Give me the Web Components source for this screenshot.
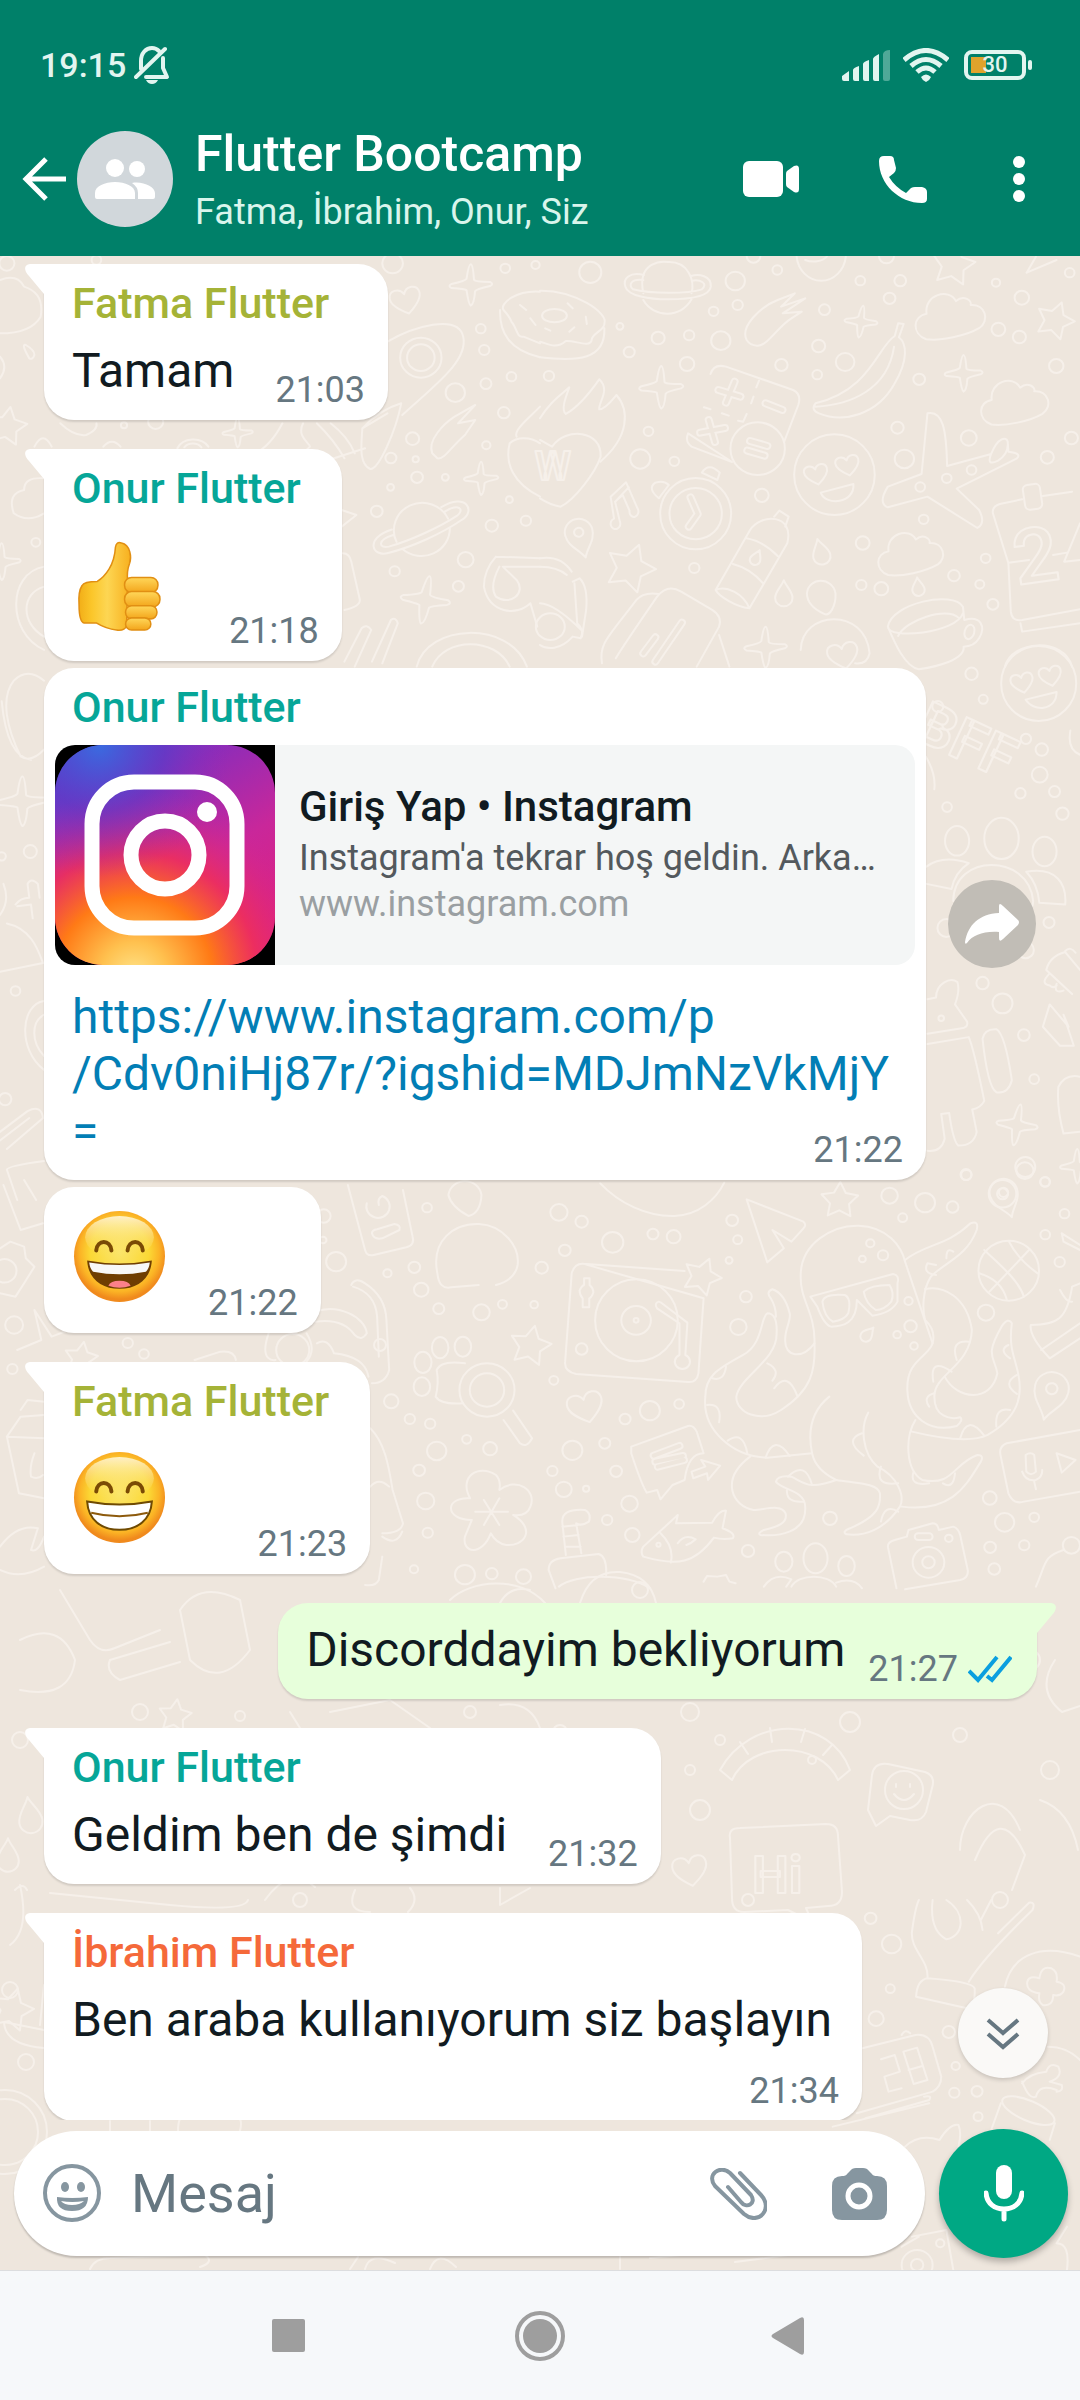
<!DOCTYPE html>
<html lang="tr">
<head>
<meta charset="utf-8">
<meta name="viewport" content="width=device-width, initial-scale=1">
<title>Flutter Bootcamp</title>
<style>
  html, body { margin: 0; height: 100%; }
  body { font-family: Roboto, "Noto Sans", sans-serif; color: #111b21; background: #eee6dd; }
</style>
</head>
<body>
<chat-app>
  <status-bar slot="top" time="19:15" battery="30"></status-bar>
  <chat-header slot="top">
    <span slot="title">Flutter Bootcamp</span>
    <span slot="members">Fatma, İbrahim, Onur, Siz</span>
  </chat-header>

  <chat-message tail time="21:03" style="--sender:#a5b337"><span slot="sender">Fatma Flutter</span>Tamam</chat-message>
  <chat-message tail emoji time="21:18" style="--sender:#06a698"><span slot="sender">Onur Flutter</span><emoji-glyph name="thumb"></emoji-glyph></chat-message>
  <chat-message time="21:22" follow forward style="--sender:#06a698"><span slot="sender">Onur Flutter</span>
    <link-preview slot="preview">
      <span slot="title">Giriş Yap • Instagram</span>
      <span slot="description">Instagram'a tekrar hoş geldin. Arka…</span>
      <span slot="site">www.instagram.com</span>
    </link-preview>
    <chat-link href="https://www.instagram.com/p/Cdv0niHj87r/?igshid=MDJmNzVkMjY=">https://www.instagram.com/p<br>/Cdv0niHj87r/?igshid=MDJmNzVkMjY<br>=</chat-link>
  </chat-message>
  <chat-message follow emoji time="21:22"><emoji-glyph name="laugh"></emoji-glyph></chat-message>
  <chat-message tail emoji time="21:23" style="--sender:#a5b337"><span slot="sender">Fatma Flutter</span><emoji-glyph name="grin"></emoji-glyph></chat-message>
  <chat-message tail own time="21:27">Discorddayim bekliyorum</chat-message>
  <chat-message tail time="21:32" style="--sender:#06a698"><span slot="sender">Onur Flutter</span>Geldim ben de şimdi</chat-message>
  <chat-message tail stacked time="21:34" style="--sender:#f5693a"><span slot="sender">İbrahim Flutter</span>Ben araba kullanıyorum siz başlayın</chat-message>

  <message-composer slot="composer"></message-composer>
  <system-nav slot="bottom"></system-nav>
</chat-app>

<script>
const BUTTON_RESET = `button{appearance:none;border:0;margin:0;padding:0;background:none;color:inherit;font:inherit;display:flex;align-items:center;justify-content:center;cursor:pointer;flex:none}svg{display:block;flex:none}`;

function define(tag, render, after) {
  customElements.define(tag, class extends HTMLElement {
    constructor() {
      super();
      this.attachShadow({ mode: 'open' });
    }
    connectedCallback() {
      this.shadowRoot.innerHTML = render(this);
      if (after) after(this);
    }
  });
}

/* ---------- doodle wallpaper ---------- */
function star(x, y, r, turn = 0) {
  let d = '';
  for (let i = 0; i < 10; i++) {
    const a = (turn + i * 36 - 90) * Math.PI / 180, k = i % 2 ? r * 0.52 : r;
    d += (i ? 'L' : 'M') + (x + k * Math.cos(a)).toFixed(1) + ' ' + (y + k * Math.sin(a)).toFixed(1);
  }
  return `<path d="${d}Z"/>`;
}
function spark(x, y, r, turn = 0) {
  return `<path transform="translate(${x} ${y}) rotate(${turn}) scale(${r / 20})" d="M0-20Q2-20 3-5Q4-3 18-3Q22-1 18 1Q5 4 4 6Q3 19 0 20Q-2 19-4 5Q-5 4-18 3Q-22 1-18-1Q-5-4-4-6Q-2-20 0-20Z"/>`;
}
function cloud(x, y, s, turn = 0) {
  return `<path transform="translate(${x} ${y}) rotate(${turn}) scale(${s})" d="M-22-6C-22-26 4-30 9-15C18-21 25-13 23-9C38-8 40 10 28 16C14 22-12 24-26 20C-40 12-36-6-22-6Z"/>`;
}
function heart(x, y, s, turn = 0) {
  return `<path transform="translate(${x} ${y}) rotate(${turn}) scale(${s})" d="M0 16C-10 9-18 2-17-6C-16-15-4-16 0-7C4-16 16-15 17-6C18 2 10 9 0 16Z"/>`;
}
function drop(x, y, s, turn = 0) {
  return `<path transform="translate(${x} ${y}) rotate(${turn}) scale(${s})" d="M0-14C2-8 9-2 9 5A9 9 0 0 1-9 5C-9-2-2-8 0-14Z"/>`;
}
function pin(x, y, s, turn = 0) {
  return `<g transform="translate(${x} ${y}) rotate(${turn}) scale(${s})"><path d="M0 24C-4 14-15 8-15-5A15 15 0 0 1 15-5C15 8 4 14 0 24Z"/><circle cy="-5" r="5"/></g>`;
}
function dots(list) {
  return list.trim().split(/\s+/).map(t => { const [x, y, r] = t.split(','); return `<circle cx="${x}" cy="${y}" r="${r}"/>`; }).join('');
}
function planet(x, y, s, turn = 0) {
  return `<g transform="translate(${x} ${y}) rotate(${turn}) scale(${s})"><path d="M-25 3A25 25 0 1 1 25 3M-23 11A25 25 0 0 0 23 11M-24-9C-50-12-50 7-36 9C-15 13 15 13 36 9C50 7 50-12 24-9M-25-4C-40-6-42 2-33 4C-15 7 15 7 33 4C42 2 40-6 25-4"/></g>`;
}
const tile = (x, y, sy, body) => `<g transform="translate(${x} ${y}) scale(.3444 ${sy})">${body}</g>`;

const upperRight = tile(540, 250, .3333, dots('146,67,32 567,93,28 689,60,14 574,165,15 504,184,14 433,256,15 343,264,19 232,229,10 259,306,16 525,272,28 427,342,21 826,179,16 930,92,14 1015,145,17 1046,92,17 1324,98,12 1399,143,21 1331,238,20 1392,261,19 1499,348,21 809,288,19 886,336,27 805,374,14 701,345,18 1101,388,17 1245,564,23 1038,533,18 1058,627,28 1473,622,19 1543,564,19 26,378,15 315,544,14 390,634,14 291,627,29 644,736,20 448,954,15 937,879,20 1114,808,14 933,1005,15 991,1016,20 1202,977,17 1277,1003,13 1294,925,14 1315,1063,16 1538,68,14 620,18,20 1006,18,22') + `
  <path d="M300 130C280 30 360 34 372 36C430 34 450 90 440 130M300 150C330 205 410 205 440 148M302 75C260 65 240 85 248 110C255 138 320 148 372 148C440 148 492 138 496 110C498 75 460 72 438 78M300 90C265 85 255 105 270 118C320 132 430 132 470 118C490 100 465 88 442 92"/>
  <path d="M600 270C580 230 640 170 690 150L740 130L700 170L770 145L705 190L760 185L730 205C690 230 660 290 630 287Q610 286 600 270Z"/>
  <path d="M1040 220L1030 258C980 290 960 420 800 460Q785 480 810 490C880 520 980 495 1030 400C1070 330 1065 280 1042 262L1056 222ZM800 470C900 465 1010 420 1028 290"/>
  <path d="M745 20A72 82 0 0 0 888 20M770 30A45 30 0 0 0 833 20"/>
  <path d="M0 122C100 120 200 190 187 220C190 240 150 250 150 270C145 295 100 270 75 273C45 300 20 280 0 275M187 235C190 330 110 335 0 322M80 160L95 175M133 200L136 222M85 245L100 232M15 235L30 242"/><ellipse cx="42" cy="197" rx="36" ry="20"/>
  <path d="M495 372Q505 340 540 350L735 420Q760 432 750 465L709 575M558 636L440 590Q420 575 430 550ZM636 392L628 412M620 440L613 460M476 472L495 478M528 490L548 497M600 492L590 515L575 512"/>
  <circle cx="632" cy="596" r="79"/><g class="wide"><path d="M610 573L660 588M602 602L652 617M655 460L704 480M565 395L540 458M518 420L582 440M490 510L508 576M465 548L537 534"/></g><g class="core"><path d="M610 573L660 588M602 602L652 617M655 460L704 480M565 395L540 458M518 420L582 440M490 510L508 576M465 548L537 534"/></g>
  <ellipse cx="855" cy="674" rx="117" ry="121"/><path d="M815 728L910 702C915 760 830 770 815 728Z"/>
  <path d="M1125 490C1170 480 1180 540 1182 648L1310 612C1330 560 1355 560 1358 575L1360 605Q1400 610 1385 625L1210 716L1275 780Q1295 820 1270 834L1125 740L1010 772Q980 760 1010 710L1108 672ZM1310 612Q1295 650 1330 632Q1362 610 1358 575"/>
  <circle cx="1104" cy="711" r="14"/><circle cx="1181" cy="685" r="14"/><circle cx="1253" cy="660" r="14"/>
  <path d="M0 505C30 455 55 440 85 412C75 440 60 480 75 492C95 480 130 450 172 388C205 420 170 455 172 478C190 478 210 450 222 435C260 480 260 560 175 635"/>
  <path d="M0 570L35 590C75 530 180 540 176 620C160 670 100 750 60 770Q30 765 0 745"/>
  <path d="M205 740L250 697L283 775A13 16 0 1 1 260 782L240 735L218 755L232 815A14 16 0 1 1 215 806ZM218 755L258 712"/>
  <ellipse cx="452" cy="791" rx="103" ry="107"/><ellipse cx="452" cy="791" rx="76" ry="77"/><g class="wide"><path d="M437 742L458 792L432 830"/></g><g class="core"><path d="M437 742L458 792L432 830"/></g><path d="M470 668Q490 635 522 668L515 690ZM345 745Q310 715 335 698Q360 690 374 705Z"/>
  <path d="M510 1020L610 840C640 790 740 790 718 880L608 1075C570 1070 520 1040 510 1020C540 1005 590 1030 608 1075M600 865Q650 875 690 918M560 942Q610 955 648 1000M680 800L695 782L722 800L712 830"/>
  <path d="M1360 940L1315 790Q1312 770 1335 762L1400 748M1460 738L1545 725M1360 940L1367 1085Q1370 1115 1400 1110L1568 1078M1395 1120L1400 1145L1568 1120M1360 938L1420 930M1490 915L1530 908M1568 820L1522 935L1568 930"/><rect x="1405" y="703" width="50" height="75" rx="14" transform="rotate(-8 1430 740)"/>
  <path d="M1010 1130C1020 1060 1200 1020 1228 1070L1232 1110C1280 1095 1295 1130 1275 1165Q1260 1190 1230 1190C1235 1230 1150 1250 1100 1258C1060 1250 1030 1180 1010 1130C1010 1170 1210 1150 1228 1090M1040 1158C1060 1110 1180 1070 1215 1103"/><ellipse cx="1247" cy="1146" rx="14" ry="22" transform="rotate(15 1247 1146)"/>
  <path d="M180 1240C170 1180 200 1160 280 1050Q300 1025 345 1032M220 1225Q240 1190 340 1040Q370 1000 410 1025L500 1080Q530 1100 520 1130L455 1250M520 1155L550 1250"/><g class="wide"><path d="M300 1210L335 1162M335 1235L412 1118"/></g><g class="core"><path d="M300 1210L335 1162M335 1235L412 1118"/></g>
  <path d="M775 1030C780 980 850 980 858 1030C860 1070 840 1100 825 1092C800 1080 775 1060 775 1030ZM757 1200C760 1080 945 1070 957 1210Q950 1245 915 1240"/>
  <path d="M0 925Q60 915 92 965M0 950Q50 950 78 975M100 1000L108 1120Q130 1140 118 1165L95 1160C60 1200 20 1200 0 1185M0 1060Q40 1060 120 1140M95 995L115 985Q140 1010 134 1080L122 1160"/><ellipse cx="30" cy="1130" rx="42" ry="40"/>
  <path d="M1350 1250C1370 1170 1520 1160 1545 1250M1413 68L1440 20M1413 68L1500 30"/>` +
  star(1200, 45, 65, 10) + star(1495, 212, 58, 20) + star(262, 955, 75, 20) + spark(352, 412, 64) + spark(932, 215, 48, 8) + spark(1230, 370, 55) + spark(655, 1192, 62) +
  cloud(1188, 200, 2.9, -8) + cloud(1375, 458, 2.8, -8) + cloud(1073, 912, 2.7, -8) + heart(802, 672, 2, -12) + heart(893, 645, 2, -12) + heart(880, 1215, 2.6, -12) +
  pin(116, 860, 2.7, -15) + drop(815, 905, 2.8, -14) + drop(708, 1030, 2.8) + drop(1098, 1010, 2, -6) + drop(628, 922, 1.7, 25) +
  `<text x="-15" y="690" font-size="120" font-weight="700">W</text><text x="1385" y="1005" font-size="230" font-weight="500" transform="rotate(-8 1385 1005)">2</text>`);

const upperLeft = tile(0, 250, .3333, dots('1140,40,30 1467,55,14 1396,236,14 1406,300,15 1485,380,14 1411,401,16 1322,428,28 1463,488,17 1198,566,19 1412,586,12 1135,624,16 1207,628,9 1211,682,17 1293,682,10 1134,712,10 1094,784,17 1479,749,10 1428,827,18 1527,812,15 1352,929,23 1146,964,15 1331,1009,16 104,877,13 360,526,9 452,515,22 1555,45,12 20,40,22 280,30,14') + `
  <path d="M1125 275C1200 230 1330 190 1345 260C1360 330 1270 400 1168 495M1165 460C1150 540 1100 660 1075 657C1040 640 1050 580 1052 535Q1100 480 1165 460M1125 490L1052 535"/>
  <circle cx="1222" cy="323" r="60"/><circle cx="1222" cy="323" r="40"/>
  <path d="M1255 610C1240 570 1290 520 1320 500L1380 465L1330 520L1380 510L1350 555C1310 590 1290 630 1270 625Z"/>
  <path d="M1568 125C1500 120 1450 160 1462 180Q1480 200 1485 215C1500 230 1500 265 1520 260L1568 280M1452 180C1450 250 1480 300 1568 322M1510 165L1528 180M1540 205L1555 225"/>
  <path d="M1500 560C1490 540 1540 500 1568 470M1480 580C1500 560 1540 560 1568 580M1480 580C1465 640 1490 700 1568 740"/>
  <path d="M820 520Q780 600 720 620M880 520C860 560 900 580 900 590L880 610M920 520Q970 570 1000 625M960 520Q1010 560 1030 610M970 625L1060 595"/>
  <path d="M515 595A50 42 0 0 1 605 590M535 592A30 25 0 0 1 585 592M100 590Q125 540 150 590M300 590Q325 560 350 590M175 520Q215 560 250 555Q285 540 280 520"/>
  <path d="M0 90Q50 70 70 110Q130 130 118 200Q90 250 0 250M0 320Q25 350 0 385M85 325Q60 280 75 285Q100 300 100 315Q95 330 85 325"/>
  <path d="M128 790Q80 820 40 790Q20 730 70 720Q70 680 128 685M128 950C20 970 20 1150 128 1200M128 1010C60 1030 60 1120 128 1160"/>
  <path d="M992 780L1035 795L992 830M995 910Q1015 910 1020 935L1045 1050Q1045 1070 1000 1080"/>
  <path d="M1440 920L1568 925M1440 920Q1405 960 1405 1010C1420 1090 1500 1100 1540 1060L1560 1130M1450 950Q1420 1010 1440 1040C1480 1070 1530 1030 1500 990L1460 950H1568"/>
  <path d="M1000 1235L1050 1135Q1065 1120 1078 1140L1030 1250M1080 1235L1135 1110Q1150 1100 1155 1120L1110 1240M1210 1250C1240 1120 1480 1110 1530 1250M1255 1250C1290 1160 1440 1160 1480 1250"/>` +
  spark(1367, 105, 62) + spark(690, 548, 44) + spark(1397, 685, 50) + spark(1235, 1050, 72, 10) + heart(1178, 150, 2.6, -14) + star(20, 530, 60, 10) + planet(1222, 832, 3.3, -25) + spark(5, 935, 55));

const midRight = tile(540, 660, .3444, dots('1253,40,18 1287,114,13 1411,229,15 1457,260,18 1451,333,23 1395,387,15 1494,382,16 1182,427,14 1517,446,18 1478,762,16 1410,842,24 1285,938,18 1343,997,29 1405,1089,17 1435,1217,14 1409,1472,29 1237,1494,16 1467,1515,14 1180,778,26 1155,135,16 1165,1040,8') + `
  <circle cx="1448" cy="68" r="109"/><path d="M1410 115L1500 93C1500 150 1430 150 1410 115ZM1120 280Q1150 330 1145 375"/>
  <text x="1080" y="225" font-size="170" font-weight="700" transform="rotate(25 1080 225)">BFF</text>
  <ellipse cx="1211" cy="525" rx="35" ry="43"/><ellipse cx="1340" cy="518" rx="50" ry="60"/><ellipse cx="1465" cy="556" rx="35" ry="43"/>
  <path d="M1122 600Q1170 565 1245 590C1215 610 1200 640 1195 665L1122 650M1200 700C1200 560 1420 560 1432 700Q1430 745 1380 738L1200 710M1412 615C1500 600 1530 650 1525 710L1450 705Q1445 650 1412 615"/>
  <path d="M1125 985L1150 980C1150 940 1190 920 1212 935Q1220 960 1205 1000L1240 1050Q1245 1068 1220 1070L1125 1085M1125 1115L1245 1095Q1260 1130 1290 1280Q1280 1300 1255 1305L1268 1370Q1260 1410 1215 1410Q1200 1400 1188 1315L1165 1318L1175 1390Q1165 1430 1125 1425"/>
  <path d="M1285 1100Q1290 1070 1325 1072Q1350 1085 1370 1220Q1360 1260 1325 1255Q1300 1240 1285 1100ZM1480 1000L1535 1065L1520 1030L1550 1120L1510 1120L1460 1065Z"/>
  <path d="M1470 900Q1480 860 1525 848L1568 900M1470 900L1545 970M1480 910Q1450 940 1480 945Q1490 955 1500 945M1500 940Q1490 970 1520 960M1525 845Q1540 830 1555 850M1540 205Q1530 260 1568 275M1520 1375Q1500 1300 1505 1240Q1525 1200 1568 1210M1520 1375L1568 1370"/>
  <circle cx="1343" cy="1550" r="40"/><circle cx="1343" cy="1550" r="16"/>` +
  heart(1400, 65, 1.9, -12) + heart(1482, 45, 1.9, -12) + spark(1385, 1350, 60, 10) + spark(1560, 1470, 50));

const lowerRight = tile(540, 1170, .3333, dots('55,127,25 121,155,18 211,217,31 328,192,16 388,200,20 72,241,17 558,151,17 574,209,13 549,271,10 598,380,17 576,471,24 1015,77,24 1118,98,29 1198,111,17 1053,143,13 1238,15,15 1523,131,14 1467,194,14 1509,276,15 1295,428,24 40,631,13 319,722,29 404,702,14 247,747,16 188,820,16 94,841,29 221,904,17 36,903,15 69,958,23 134,956,9 260,1001,24 195,1050,15 268,1095,21 604,1143,18 842,1045,20 1306,984,20 1349,1057,28 1435,1042,14 1307,1132,17 1406,1126,15 1319,1197,17 959,220,12 996,256,15 936,267,10 1070,393,12 1076,469,18 1037,494,11 1086,528,11 5,293,18 1466,36,14 1408,2,25') + `
  <path d="M125 281L420 303M475 385L460 610Q455 638 430 636L105 612Q70 605 73 575L92 310Q100 280 125 281Z"/>
  <ellipse cx="280" cy="451" rx="120" ry="123"/><circle cx="279" cy="451" r="43"/><circle cx="279" cy="451" r="7"/><circle cx="121" cy="537" r="17"/>
  <path d="M128 325H144V345Q155 355 155 367Q150 382 143 385V412H124V385Q115 375 115 362Q120 348 128 345ZM345 395Q330 400 340 415L405 460V555A22 22 0 1 0 422 555L428 458L350 397Z"/>
  <path d="M175 40C230 100 310 140 390 138C460 135 510 90 535 38M600 88L765 155Q775 165 765 175L730 215L675 180L708 235L660 277Z"/>
  <path d="M797 520C800 430 755 390 757 320C755 220 850 165 925 167C1010 170 1050 230 1060 275L1140 520C1130 560 1060 570 1067 665C1070 740 1130 790 1210 768Q1230 750 1220 742C1190 750 1145 740 1145 680C1145 610 1250 590 1254 480C1240 380 1170 345 1118 357"/>
  <path d="M1060 270C1120 220 1180 230 1250 160Q1275 150 1268 180C1240 260 1170 280 1135 320C1110 360 1110 420 1118 450Q1150 480 1140 520"/>
  <path d="M797 520C800 600 790 660 700 720C640 760 570 730 570 680C580 620 690 570 687 490Q690 430 660 430C640 440 650 520 590 555C510 600 480 620 480 680C470 780 560 860 660 863L790 850M797 520C760 570 710 560 712 510C710 480 730 450 725 430Q710 370 675 358Q655 365 670 385Q685 410 685 440"/>
  <path d="M840 680C780 730 780 800 790 850Q800 900 860 930C780 960 770 940 730 920Q690 915 685 935C700 960 770 960 770 1010C775 1090 690 1100 640 1095Q630 1090 650 1080C690 1070 720 1060 713 1030C700 1000 650 1020 620 1020C560 1010 520 930 610 860"/>
  <path d="M953 728C930 770 935 850 980 890C1040 920 1060 980 1045 1010C1000 1080 940 1100 890 1093Q875 1085 900 1075C980 1040 990 1010 987 970C980 940 920 940 860 930M1090 750C1060 800 1060 900 1110 930C1200 950 1200 880 1270 855Q1290 855 1280 875C1240 940 1200 1030 1050 1010M1080 785C1160 805 1250 820 1300 795C1390 740 1400 680 1390 620C1380 560 1360 540 1370 460Q1360 440 1340 470C1290 560 1320 560 1328 610C1310 700 1210 690 1175 620"/>
  <path d="M500 625Q535 635 540 590M485 705Q530 700 520 757M545 812Q590 780 602 850M655 863Q680 790 725 858M660 580Q700 600 675 632M680 655Q720 600 748 680M1200 245Q1180 230 1180 265M1150 315Q1110 310 1125 280L1150 285M1245 515Q1190 510 1210 570M1195 605Q1130 560 1142 635M1145 670Q1110 680 1130 710M1360 525Q1330 540 1365 565M1385 615Q1340 640 1385 672M1365 720Q1320 710 1325 770M1220 805Q1240 730 1290 797M720 920Q770 870 790 945M717 960Q715 1000 765 995M935 790Q880 810 940 857M990 890Q970 950 1040 940M1085 905Q1070 950 1130 940M1170 940Q1200 960 1205 910M990 1055Q1000 1000 1040 1025"/>
  <path d="M785 380L1025 312Q1045 315 1038 340V395Q1020 430 965 437L920 390C920 460 880 470 845 470Q825 465 805 410ZM820 395Q825 370 885 375Q905 385 895 430Q885 450 850 455Q825 440 820 395ZM940 365Q960 345 1015 345Q1030 370 1020 395Q1000 420 975 420Q945 400 940 365"/>
  <ellipse cx="1361" cy="302" rx="88" ry="90"/><path d="M1290 240C1330 280 1390 330 1405 380M1275 310Q1340 330 1355 388M1362 215Q1390 270 1445 310M1305 365L1420 240"/>
  <path d="M1425 465C1500 465 1530 450 1545 350L1568 340M1425 465Q1420 500 1480 565L1568 505M1455 540L1568 460M1510 360Q1530 400 1545 395M1515 190L1568 225M1515 190L1520 215L1568 240"/>
  <path d="M1568 780L1355 820Q1330 830 1338 860L1360 970Q1375 1005 1405 995L1568 965M1410 855Q1425 845 1435 855L1440 905Q1425 920 1412 905ZM1400 905Q1410 935 1440 930Q1460 920 1458 900M1435 935L1440 958M1500 850L1555 870L1515 908Z"/>
  <path d="M265 830L430 768Q445 765 455 785L475 850Q430 850 420 930L385 945L350 988L340 960L310 968Q295 945 265 850ZM440 905L480 890L468 870L523 887L488 930L485 910L445 925Z"/><g class="wide"><path d="M330 857L405 828M335 875L415 858M342 890L418 870"/></g><g class="core"><path d="M330 857L405 828M335 875L415 858M342 890L418 870"/></g>
  <path d="M300 1130L400 1035L395 1060L500 1058Q520 1020 540 1022L530 1075Q570 1090 560 1105Q530 1110 505 1103C450 1180 400 1190 300 1160Q290 1145 300 1130ZM350 1090Q390 1130 380 1178M400 1120Q420 1090 452 1108Q440 1120 425 1125"/><circle cx="344" cy="1124" r="6"/>
  <path d="M75 1155L65 1060Q60 1015 130 1020Q150 1030 142 1055Q120 1070 105 1060L120 1150M65 1070L110 1065M68 1100L112 1095M72 1130L118 1130M45 1255L25 1200Q25 1170 60 1165L170 1152Q195 1160 192 1215M55 1250C100 1210 250 1210 320 1255"/>
  <path d="M1035 1255L1010 1130Q1010 1115 1030 1110L1065 1100L1070 1080L1140 1060Q1155 1060 1158 1080L1200 1070Q1215 1075 1220 1095L1242 1200Q1245 1225 1220 1230L1060 1258"/><circle cx="1128" cy="1177" r="46"/><circle cx="1128" cy="1177" r="18"/><circle cx="1187" cy="1105" r="11"/><rect x="1088" y="1090" width="52" height="20" rx="10"/>
  <ellipse cx="708" cy="1175" rx="25" ry="30"/><ellipse cx="800" cy="1165" rx="35" ry="45"/><ellipse cx="890" cy="1188" rx="24" ry="30"/><path d="M650 1250Q680 1205 730 1228L715 1250M730 1250C750 1210 840 1210 860 1250M860 1238Q910 1220 935 1255M1440 1250C1470 1180 1460 1160 1520 1140M475 1235L485 1218L515 1220L540 1215L550 1235L568 1240"/><circle cx="1543" cy="1126" r="25"/>` +
  star(870, 92, 56, 2) + star(470, 320, 58, 22) + heart(132, 710, 3, -15) + pin(1350, 80, 2.7, -18) + pin(1482, 672, 3.3, 14) + drop(952, 492, 1.8, 40));

const midLeft = tile(0, 1170, .3333, dots('1240,113,14 1203,292,17 1125,310,12 1223,359,21 1274,416,16 1398,427,24 1459,403,13 1551,404,11 976,275,29 940,138,20 938,210,10 1136,694,21 1190,747,15 1249,761,15 1268,843,28 1355,808,13 1423,836,20 1217,901,17 1236,993,25 1242,1088,15 1350,1214,29 1428,1211,17 1520,1220,22 1202,1198,12 41,465,26 36,597,15 371,519,15 418,552,14') + `
  <path d="M1010 45L1060 240Q1065 260 1085 255L1180 232Q1205 225 1198 200L1170 60M1065 100A34 34 0 1 0 1110 78Q1095 85 1100 105M1080 190Q1080 180 1095 178L1145 162Q1165 165 1160 180L1110 205Q1085 210 1080 190Z"/>
  <path d="M1302 75C1310 20 1390 20 1398 75Q1395 130 1360 138Q1310 110 1302 75ZM1270 310C1250 210 1320 160 1390 162C1460 165 1510 230 1503 285Q1495 330 1440 345M1270 310Q1275 360 1310 352L1390 345"/>
  <path d="M1020 345Q1030 320 1060 340Q1120 380 1122 450L1130 600Q1120 640 1080 640M1025 350Q1090 370 1095 440L1100 560M915 425C980 400 1060 440 1065 490Q1050 515 1030 495C1000 450 950 450 915 455M780 490C750 580 800 570 800 570M920 520Q950 500 970 550Q1060 560 1070 620M890 490Q920 540 890 575"/><circle cx="850" cy="540" r="48"/>
  <ellipse cx="1278" cy="533" rx="24" ry="32"/><ellipse cx="1344" cy="530" rx="24" ry="30"/><ellipse cx="1228" cy="577" rx="25" ry="32"/><ellipse cx="1225" cy="650" rx="24" ry="28"/><path d="M1350 580Q1280 570 1268 600Q1275 640 1265 680Q1280 705 1345 700"/><circle cx="1414" cy="660" r="80"/><circle cx="1414" cy="660" r="50"/><path d="M1462 750L1510 820Q1530 835 1545 805L1490 722"/>
  <path d="M1370 1050C1290 1050 1290 980 1365 985C1330 920 1390 880 1440 915Q1455 930 1450 960C1500 920 1560 960 1540 1010Q1530 1040 1490 1035C1560 1080 1520 1130 1470 1125Q1440 1120 1425 1090C1400 1160 1340 1150 1350 1100ZM1380 1025H1475M1405 990L1450 1065M1450 985L1405 1065"/>
  <path d="M1075 775C1120 820 1130 900 1140 960L1170 1060Q1165 1090 1110 1090M1075 950Q1100 920 1130 950M1110 1100Q1150 1130 1168 1085M1110 1160L1100 1230Q1090 1250 1060 1245"/>
  <path d="M0 270A35 35 0 1 1 0 335M0 235L30 215L70 230L75 265L100 290L70 340L45 380L0 370M10 45L60 180L125 160M70 30L105 90M50 540L120 510L100 420L150 500L200 480M60 720L80 690L128 695M20 800L128 805M20 800L60 740L128 735M20 800L55 970L128 985M100 850Q85 890 90 920Q110 930 125 915M0 1130Q50 1060 110 1075L90 1140Q110 1150 128 1100M0 1200Q60 1230 128 1190M565 570L640 545Q680 540 685 570"/>` +
  star(1540, 528, 62, 12) + star(235, 565, 50, 10));

const upperLink = tile(0, 660, .3444, dots('88,556,19 45,961,14 15,1275,18 5,570,12') + `
  <path d="M128 60Q80 20 40 60C0 110 20 200 60 280Q90 300 128 260M5 120Q20 280 90 290M45 710Q60 690 85 690L80 650Q90 630 110 650L115 690M50 715L90 710L95 750M10 650Q30 700 0 740M20 765C90 780 110 840 125 880L0 905M128 990C60 1000 50 1130 128 1190M128 1030C90 1050 90 1110 128 1150M0 1370L80 1310Q120 1290 125 1330L20 1420M0 1395L85 1330M20 1480Q20 1470 128 1455M20 1480L50 1568"/>` + spark(65, 410, 72));

const bottomRight = tile(540, 1900, .3333, dots('960,55,17 1021,132,28 1017,266,13 976,356,22 1187,396,18 1207,498,12 1203,578,15 1269,574,16 1272,650,13 1162,1030,12') + `
  <path d="M1125 235C1130 180 1075 150 1080 95Q1090 20 1100 0M1125 235Q1095 240 1092 290L1240 325Q1265 320 1262 265Q1255 245 1125 235M1245 245Q1290 170 1430 30Q1440 5 1420 8L1330 100M1240 0Q1280 40 1285 90M1310 0L1280 60M1140 0Q1130 90 1180 118C1230 110 1240 40 1180 0M1350 260C1370 160 1460 130 1568 170"/>
  <path d="M1415 245Q1420 225 1450 235Q1455 195 1485 205Q1505 215 1500 245Q1530 250 1520 275Q1510 290 1490 285Q1490 320 1460 315Q1445 305 1450 280Q1410 275 1415 245ZM1400 550Q1420 520 1470 515Q1480 485 1505 500Q1520 530 1480 545L1515 555Q1520 575 1500 575M1400 545Q1420 600 1440 590M1440 590Q1450 550 1500 570M1568 480Q1530 440 1475 440"/>
  <path d="M936 445L1090 405Q1130 400 1140 440L1165 530Q1165 560 1140 575L920 640M1050 405Q1060 385 1075 400M945 655L1130 600Q1140 585 1115 590M850 680L1130 610"/>
  <path d="M990 478L1030 465L1045 515L1000 530L1012 575L1050 565M1055 455L1095 443L1125 540L1085 552ZM1070 510L1110 498"/>
  <ellipse cx="1418" cy="632" rx="82" ry="30" transform="rotate(24 1418 632)"/><path d="M1338 610L1310 690M1495 670L1480 720M1060 740Q1100 700 1160 720Q1190 670 1215 675Q1225 700 1215 740M1080 1010L1180 990L1200 1110M1050 1040L1100 1010M1530 980L1500 1030Q1540 1030 1530 1110"/><circle cx="1095" cy="1095" r="45"/><circle cx="1095" cy="1095" r="18"/>`);

/* Lower band, drawn straight in wallpaper units */
const loose = dots('560,1732,7 640,1590,8 690,1712,9 720,1740,5 748,1900,6 700,1810,10 850,1722,10 960,1735,7 1050,1770,9 1030,1660,10 690,1770,5 812,1760,4 1000,1900,8 470,1712,6 300,1900,7 140,1712,8 240,1716,5 380,1345,6 20,1740,8 10,1990,8 26,2062,8') +
  star(175, 1716, 17, 8) + star(12, 2010, 22, 15) + drop(30, 1815, 1.3, -8) + drop(8, 1855, 1.2) + heart(690, 1870, 1, -10) +
  `<text x="752" y="1893" font-size="52" font-weight="700">Hi</text>
  <path d="M730 1838Q728 1828 740 1828L826 1824Q838 1824 838 1836L842 1892Q842 1906 828 1906L806 1908L812 1922L788 1910L744 1912Q732 1912 732 1898ZM868 1810L872 1775Q874 1762 888 1764L925 1772Q936 1776 932 1788L926 1812Q922 1822 910 1820L890 1816L876 1826Z"/>
  <circle cx="904" cy="1790" r="19"/><path d="M894 1794Q904 1806 914 1794M896 1784v3M910 1784v3"/>
  <path d="M720 1770C750 1715 830 1715 850 1770L838 1780C820 1740 750 1740 732 1780ZM740 1742l8 12M770 1728l2 14M805 1729l-4 13M832 1745l-9 10M960 1850C960 1810 1000 1780 1020 1830M975 1860Q1000 1800 1025 1855L1012 1890M1040 1800Q1070 1810 1078 1850M1055 1660Q1035 1690 1062 1712L1080 1706"/>
  <path d="M450 1600C470 1580 520 1575 545 1603M500 1603Q510 1585 530 1590M580 1603Q590 1570 620 1572Q650 1575 656 1603M60 1590L90 1640Q100 1655 115 1648L160 1630M20 1640Q60 1620 75 1660Q70 1700 20 1690M290 1712L300 1728M330 1712L390 1700L430 1728M500 1705Q530 1700 540 1728M110 1660l60-18M120 1680l60-18M110 1660q-5 12 10 20M180 1610Q200 1580 240 1600L250 1650Q220 1690 190 1660Z"/>
  <path d="M44 1985L40 2025M4 2022L44 2030M4 2022Q5 2045 44 2048M50 1893L170 1905Q245 1912 248 1900M265 1900Q290 1865 315 1887M355 1890Q345 1912 370 1912M410 1888Q420 1900 408 1912M500 1888L500 1905L530 1888M20 1885Q30 1930 10 1945M15 1890q8-8 12 0"/>
  <circle cx="5" cy="2132" r="42"/><circle cx="5" cy="2132" r="33"/><path d="M110 2131v-10M150 2131v-10M178 2131q0-8 2-12M240 2131q2-8 0-12M90 2269Q95 2258 110 2258L205 2255Q215 2262 200 2267M350 2269l8-12M365 2269q5-18 30-6M430 2269q8-20 26-2M620 2269v-12M650 2258l60-6M735 2262l60-8"/>`;

define('chat-wallpaper', () => `
<style>
:host{display:block;background:#eee6dd;overflow:hidden}
svg{display:block;width:100%;height:100%}
path,circle,ellipse,rect{vector-effect:non-scaling-stroke}
text{stroke-width:6px}
text[font-size="52"]{stroke-width:2px}
.wide{stroke-width:8px}
.core{stroke:#eee6dd;stroke-width:4px}
</style>
<svg aria-hidden="true" viewBox="0 256 1080 2014" preserveAspectRatio="xMidYMin slice" fill="none" stroke="#f6f0ea" stroke-width="2" stroke-linejoin="round" stroke-linecap="round" font-family="Roboto, sans-serif">
${upperLeft}${upperRight}${upperLink}${midRight}${midLeft}${lowerRight}${bottomRight}${loose}</svg>`);

/* ---------- page frame ---------- */
define('chat-app', () => `
<style>
:host{display:flex;flex-direction:column;height:100vh;min-height:0}
.top{flex:none;background:#008069;color:#fff}
.room{flex:1;min-height:0;display:flex;flex-direction:column;position:relative}
chat-wallpaper{position:absolute;inset:0}
.view{flex:1;min-height:0;position:relative;overflow:hidden}
main{padding-top:8px;display:flex;flex-direction:column}
.composer{flex:none;position:relative}
${BUTTON_RESET}
button.latest{position:absolute;right:32px;bottom:42px;width:90px;height:90px;border-radius:50%;background:#faf9f7;color:#667781;box-shadow:0 2px 4px rgba(0,0,0,.16)}
</style>
<div class="top"><slot name="top"></slot></div>
<div class="room">
  <chat-wallpaper></chat-wallpaper>
  <div class="view">
    <main><slot></slot></main>
    <button class="latest" aria-label="En son mesaja git"><svg width="34" height="34" viewBox="0 0 34 34" fill="none" stroke="currentColor" stroke-width="4"><path d="M2 4L17 17L32 4M2 18L17 31L32 18"/></svg></button>
  </div>
  <div class="composer"><slot name="composer"></slot></div>
</div>
<slot name="bottom"></slot>`);

define('status-bar', el => `
<style>
:host{display:flex;align-items:center;box-sizing:border-box;height:102px;padding:28px 48px 0 40px;color:#e2f5f0;font-size:34px;font-weight:500;line-height:40px}
.bell{margin-left:8px}.grow{flex:1}.wifi{margin:0 15px 0 13px}
.battery{box-sizing:border-box;width:62px;height:30px;border:4px solid;border-radius:8px;display:flex;align-items:center;justify-content:center;font-size:22px;line-height:22px;background:linear-gradient(#dfa32c,#dfa32c) 3px 3px/15px 16px no-repeat}
.cap{width:4px;height:10px;border-radius:2px;background:currentColor;margin-left:2px}
svg{display:block}
</style>
<time>${el.getAttribute('time')}</time>
<svg class="bell" width="36" height="38" viewBox="0 0 36 38" fill="none" stroke="currentColor" stroke-width="4" stroke-linecap="round" stroke-linejoin="round"><path d="M2 31L31 3"/><path d="M7 23V15C7 7 12 2 18 2Q22 2 25 5" /><path d="M29 12V22L33 31H12"/><path d="M12 34H24Q22 38 18 38Q14 38 12 34Z" fill="currentColor" stroke="none"/></svg>
<span class="grow"></span>
<svg width="48" height="31" viewBox="0 0 48 31" fill="currentColor"><path d="M0 26L7 21V31H2Q0 31 0 29ZM11 20Q11 18 17 16V31H13Q11 31 11 29ZM21 14Q21 12 27 10V31H23Q21 31 21 29ZM31 9Q31 7 37 4V31H33Q31 31 31 29Z"/><path opacity=".35" d="M41 4Q42 0 48 0V29Q48 31 46 31H43Q41 31 41 29Z"/></svg>
<svg class="wifi" width="46" height="34" viewBox="0 0 46 34" fill="none" stroke="currentColor" stroke-width="5"><path d="M1 12Q23-7 45 12M8 18Q23 5 38 18M14 24Q23 16 32 24"/><path fill="currentColor" stroke="none" d="M18 29Q23 24 28 29Q27 32 23 34Q19 32 18 29Z"/></svg>
<span class="battery">${el.getAttribute('battery')}</span><span class="cap"></span>`);

define('chat-header', () => `
<style>
:host{display:flex;align-items:center;box-sizing:border-box;height:154px;padding:0 11px 0 22px}
${BUTTON_RESET}
.avatar{width:96px;height:96px;border-radius:50%;background:#d1d7db;margin:0 22px 0 11px;display:flex;align-items:center;justify-content:center;flex:none}
.names{flex:1;min-width:0;display:flex;flex-direction:column;gap:8px;white-space:nowrap}
h1{margin:0;font-size:50px;line-height:58px;font-weight:500}
p{margin:0;font-size:36px;line-height:42px;color:#d9f5ec}
.call{width:132px;height:100px}.more{width:100px;height:100px}
</style>
<button aria-label="Geri"><svg width="44" height="44" viewBox="0 0 44 44" fill="none" stroke="#fff" stroke-width="5"><path d="M44 22H4M24 2L4 22L24 42"/></svg></button>
<div class="avatar"><svg width="60" height="40" viewBox="0 0 60 40" fill="#fff"><circle cx="20" cy="9" r="9"/><circle cx="42" cy="10" r="8"/><path d="M0 38V34C0 27 10 23 20 23S40 27 40 34V40H2Q0 40 0 38ZM37 24C48 22 60 28 60 34V38Q60 40 58 40H43V34Q43 28 37 24Z"/></svg></div>
<div class="names"><h1><slot name="title"></slot></h1><p><slot name="members"></slot></p></div>
<button class="call" aria-label="Görüntülü arama"><svg width="56" height="36" viewBox="0 0 56 36" fill="#fff"><rect width="40" height="36" rx="6"/><path d="M43 13Q43 11 44 10L51 5Q56 3 56 8V28Q56 33 51 31L44 26Q43 25 43 23Z"/></svg></button>
<button class="call" aria-label="Sesli arama"><svg width="48" height="47" viewBox="0 0 48 47" fill="#fff"><path d="M5 0H11Q15 0 15 4L17 12Q17 15 15 17L10 21Q16 31 27 37L32 32Q34 31 36 31H43Q48 32 48 36V43Q48 47 43 47C20 47 0 28 0 5Q0 0 5 0Z"/></svg></button>
<button class="more" aria-label="Diğer seçenekler"><svg width="12" height="46" viewBox="0 0 12 46" fill="#fff"><circle cx="6" cy="6" r="6"/><circle cx="6" cy="23" r="6"/><circle cx="6" cy="40" r="6"/></svg></button>`);

/* ---------- messages ---------- */
define('chat-message', el => {
  const own = el.hasAttribute('own'), tail = el.hasAttribute('tail');
  const hasSender = !!el.querySelector('[slot=sender]');
  return `
<style>
:host{display:flex;align-items:center;gap:22px;margin-top:29px;padding:0 43px 0 44px}
:host(:first-of-type){margin-top:0}
:host([follow]){margin-top:7px}
:host([own]){justify-content:flex-end}
${BUTTON_RESET}
.bubble{position:relative;box-sizing:border-box;max-width:882px;padding:18px 23px 21px 28px;border-radius:30px;background:var(--paper);box-shadow:0 2px 2px rgba(0,0,0,.12);--paper:#fff}
:host([tail]) .bubble{border-top-left-radius:0}
:host([own]) .bubble{--paper:#e7ffdb;border-radius:30px 0 30px 30px;padding-right:25px}
.tail{position:absolute;top:0;left:-19px;fill:var(--paper)}
:host([own]) .tail{left:auto;right:-19px;transform:scaleX(-1)}
.sender{margin:0 18px 18px 0;font-size:43px;line-height:42px;font-weight:500;color:var(--sender)}
:host([emoji]) .sender{margin-bottom:24px}
:host([forward]) .sender{margin-bottom:17px}
.row{display:flex;align-items:flex-end;justify-content:space-between;gap:41px}
:host([own]) .row{gap:23px}
.text{font-size:48px;line-height:57px}
:host([emoji]) .text{height:107px;box-sizing:border-box;padding-top:6px}
.meta{display:flex;align-items:center;gap:12px;margin-bottom:-9px;font-size:36px;line-height:36px;color:#667781}
:host([own]) .meta{gap:10px}
:host([stacked]) .row{flex-direction:column;align-items:stretch;gap:25px}
:host([stacked]) .text{margin-right:7px}
:host([stacked]) .meta{align-self:flex-end}
:host([forward]) .row{gap:0;position:relative}
:host([forward]) .text{width:831px}
:host([forward]) .meta{position:absolute;right:0;bottom:0}
button.forward{width:88px;height:88px;border-radius:50%;background:#c1bdb6}
</style>
<article class="bubble">
${tail ? '<svg class="tail" width="20" height="31" viewBox="0 0 20 31"><path d="M20 0H5Q-2 1 1 8Q2 10 4 12L19 30H20Z"/></svg>' : ''}
${hasSender ? '<div class="sender"><slot name="sender"></slot></div>' : ''}
<slot name="preview"></slot>
<div class="row"><div class="text"><slot></slot></div>
<div class="meta"><time>${el.getAttribute('time')}</time>${own ? '<svg width="44" height="28" viewBox="0 0 44 28" fill="none" stroke="#0b9fdf" stroke-width="4"><path d="M1 16L10 25L29 2M19 21L24 25L43 2"/></svg>' : ''}</div></div>
</article>
${el.hasAttribute('forward') ? '<button class="forward" aria-label="İlet"><svg width="54" height="40" viewBox="0 0 54 40" fill="#fff"><path d="M34 2Q34-2 38 2L53 16Q55 18 53 21L38 35Q34 39 34 34V28C18 27 8 31 2 39Q0 41 0 38C3 21 14 10 34 9Z"/></svg></button>' : ''}`;
});

define('chat-link', el => `
<style>:host{display:block}a{color:#027eb5;text-decoration:none;white-space:nowrap}</style>
<a href="${el.getAttribute('href')}"><slot></slot></a>`);

define('link-preview', () => `
<style>
:host{display:flex;align-items:center;height:220px;margin:0 -12px 23px -17px;background:#f4f6f6;border-radius:20px;overflow:hidden}
svg{display:block;flex:none}
.copy{flex:1;min-width:0;padding:0 20px 0 24px;display:flex;flex-direction:column;color:#111b21;white-space:nowrap}
.title{font-size:42px;line-height:48px;font-weight:500;margin-bottom:4px}
.desc{font-size:36px;line-height:46px;color:#53595d}
.site{font-size:36px;line-height:46px;color:#9a9fa2}
</style>
<svg width="220" height="220" viewBox="0 0 220 220" role="img" aria-label="Instagram">
<defs>
<linearGradient id="base" x1=".2" y1="0" x2=".8" y2="1"><stop offset="0" stop-color="#5a41cd"/><stop offset=".25" stop-color="#8e2cb8"/><stop offset=".6" stop-color="#c9279a"/><stop offset="1" stop-color="#e0207c"/></linearGradient>
<radialGradient id="warm" cx=".36" cy="1.05" r=".85"><stop offset="0" stop-color="#ffe48a"/><stop offset=".18" stop-color="#ffc14f"/><stop offset=".42" stop-color="#ff7a16"/><stop offset=".66" stop-color="#ee2f5c" stop-opacity=".9"/><stop offset="1" stop-color="#d0259a" stop-opacity="0"/></radialGradient>
<radialGradient id="cool" cx=".2" cy="0" r=".6"><stop offset="0" stop-color="#3a6be0"/><stop offset=".5" stop-color="#5a3bc8" stop-opacity=".6"/><stop offset="1" stop-color="#8e2cb8" stop-opacity="0"/></radialGradient>
</defs>
<rect width="220" height="220" fill="#000"/>
<g><rect width="220" height="220" rx="48" fill="url(#base)"/><rect width="220" height="220" rx="48" fill="url(#warm)"/><rect width="220" height="220" rx="48" fill="url(#cool)"/></g>
<g fill="none" stroke="#fff" stroke-width="15"><rect x="37" y="37" width="145" height="146" rx="42"/><circle cx="110" cy="110" r="34"/></g><circle cx="152" cy="67" r="10" fill="#fff"/>
</svg>
<div class="copy"><div class="title"><slot name="title"></slot></div><div class="desc"><slot name="description"></slot></div><div class="site"><slot name="site"></slot></div></div>`);

const FACE = `<defs><radialGradient id="f" cx=".5" cy=".45" r=".52"><stop offset="0" stop-color="#fbe56c"/><stop offset=".62" stop-color="#fbd835"/><stop offset=".84" stop-color="#fbb325"/><stop offset="1" stop-color="#f08a1d"/></radialGradient><linearGradient id="g" x2="0" y2="1"><stop offset="0" stop-color="#fff3cf" stop-opacity=".95"/><stop offset="1" stop-color="#fbe056" stop-opacity="0"/></linearGradient></defs>
<circle cx="45" cy="45" r="45" fill="url(#f)"/><ellipse cx="45" cy="26" rx="34" ry="21" fill="url(#g)"/>
<path d="M22 39C23 28 36 28 37 39M53 39C54 28 67 28 68 39" fill="none" stroke="#7a4a05" stroke-width="4" stroke-linecap="round"/>`;
const EMOJI = {
  laugh: ['Gülen yüz', FACE + `<path d="M13 49Q45 55 77 49C76 67 63 77 45 77S14 67 13 49Z" fill="#6f3e02"/><path d="M15 51Q45 56 75 51Q74 58 71 60Q45 65 19 60Q16 58 15 51Z" fill="#f8f8f8"/><path d="M34 74Q36 69 45 69T56 74Q45 78 34 74Z" fill="#fb8089"/>`],
  grin: ['Sırıtan yüz', FACE + `<path d="M13 49Q45 55 77 49C76 67 63 77 45 77S14 67 13 49Z" fill="#fff" stroke="#6f4a02" stroke-width="2"/><path d="M17 60Q45 67 73 60" fill="none" stroke="#8d5a0c" stroke-width="2"/>`],
  thumb: ['Beğendim', `<defs><linearGradient id="s" x2="1"><stop offset="0" stop-color="#f2ae18"/><stop offset=".25" stop-color="#fbc62a"/><stop offset=".55" stop-color="#fdd653"/><stop offset="1" stop-color="#f7b01f"/></linearGradient><linearGradient id="k" x2="0" y2="1"><stop offset="0" stop-color="#ffd75a"/><stop offset="1" stop-color="#f3a51b"/></linearGradient></defs>
<g stroke="#e18f13" stroke-width="1.5"><path d="M8 46Q10 42 23 42C31 37 40 26 41 8Q42 2 47 4C56 6 57 18 55 24Q52 32 53 41L52 86Q50 91 42 90Q32 89 22 83H10Q5 82 5 65Q4 52 8 46Z" fill="url(#s)"/>
<g fill="url(#k)"><rect x="50" y="38" width="33" height="15" rx="7"/><rect x="50" y="52" width="35" height="15" rx="7"/><rect x="51" y="66" width="31" height="13" rx="6"/><rect x="51" y="78" width="25" height="12" rx="6"/></g></g>`]
};
define('emoji-glyph', el => {
  const [label, art] = EMOJI[el.getAttribute('name')];
  return `<style>:host{display:flex;justify-content:center;width:95px}svg{display:block;overflow:visible}</style><svg width="91" height="91" viewBox="0 0 90 90" role="img" aria-label="${label}">${art}</svg>`;
});

/* ---------- composer and navigation ---------- */
define('message-composer', () => `
<style>
:host{display:flex;align-items:center;gap:14px;padding:9px 12px 12px 14px}
${BUTTON_RESET}
.field{flex:1;min-width:0;box-sizing:border-box;height:125px;border-radius:63px;background:#fff;box-shadow:0 2px 2px rgba(0,0,0,.2);display:flex;align-items:center;padding:0 38px 0 29px;color:#8696a0}
input{appearance:none;flex:1;min-width:0;border:0;outline:0;background:none;margin:0 24px 0 29px;padding:0;font:400 54px/64px Roboto,"Noto Sans",sans-serif;color:#111b21}
input::placeholder{color:#667781;opacity:1}
.camera{margin-left:65px}
button.mic{width:129px;height:129px;border-radius:50%;background:#00a884;box-shadow:0 4px 6px rgba(0,0,0,.25)}
</style>
<div class="field">
<button aria-label="Emoji"><svg width="59" height="59" viewBox="0 0 59 59" fill="none"><circle cx="29" cy="29" r="27" stroke="currentColor" stroke-width="4"/><g fill="currentColor"><ellipse cx="22" cy="23" rx="4" ry="5"/><ellipse cx="38" cy="23" rx="4" ry="5"/><path d="M14 33Q29 35 45 33Q45 47 29 47T14 33Z"/></g><path d="M18 37Q29 39 41 37Q37 41 29 41T18 37Z" fill="#fff"/></svg></button>
<input type="text" placeholder="Mesaj" aria-label="Mesaj">
<button aria-label="Ekle"><svg width="57" height="52" viewBox="0 0 57 52" fill="none" stroke="currentColor" stroke-width="4" stroke-linecap="round" stroke-linejoin="round"><path d="M30 5L51 27C64 41 48 58 34 46L5 18C-4 7 10-4 20 5L41 27C47 36 36 41 31 34L18 19"/></svg></button>
<button class="camera" aria-label="Kamera"><svg width="55" height="52" viewBox="0 0 55 52"><path fill="currentColor" d="M10 8Q14 8 15 6L18 3Q20 0 24 0H31Q35 0 37 3L40 6Q41 8 45 8Q55 8 55 18V42Q55 52 45 52H10Q0 52 0 42V18Q0 8 10 8Z"/><circle cx="27" cy="28" r="11" fill="none" stroke="#fff" stroke-width="5"/></svg></button>
</div>
<button class="mic" aria-label="Sesli mesaj"><svg width="40" height="57" viewBox="0 0 40 57" fill="none" stroke="#fff" stroke-width="5" stroke-linecap="round"><rect x="12" y="0" width="16" height="34" rx="8" fill="#fff" stroke="none"/><path d="M2 28C3 39 11 44 20 44S37 39 38 28M20 45V54"/></svg></button>`);

define('system-nav', () => `
<style>
:host{flex:none;display:grid;grid-template-columns:1fr 78px 1fr;align-items:center;height:130px;box-sizing:border-box;border-top:1px solid #dcdddf;background:#f6f8fa;color:#9e9e9e}
${BUTTON_RESET}
button{width:78px;height:78px}
.recent{justify-self:end;margin-right:174px}
.back{justify-self:start;margin-left:169px}
</style>
<button class="recent" aria-label="Son uygulamalar"><svg width="33" height="33" viewBox="0 0 33 33" fill="currentColor"><rect width="33" height="33" rx="2"/></svg></button>
<button aria-label="Ana ekran"><svg width="50" height="50" viewBox="0 0 50 50"><circle cx="25" cy="25" r="23" fill="none" stroke="currentColor" stroke-width="4"/><circle cx="25" cy="25" r="17" fill="currentColor"/></svg></button>
<button class="back" aria-label="Geri"><svg width="33" height="38" viewBox="0 0 33 38" fill="currentColor"><path d="M2 17L29 1Q33-1 33 3V35Q33 39 29 37L2 21Q-1 19 2 17Z"/></svg></button>`);
</script>
</body>
</html>
